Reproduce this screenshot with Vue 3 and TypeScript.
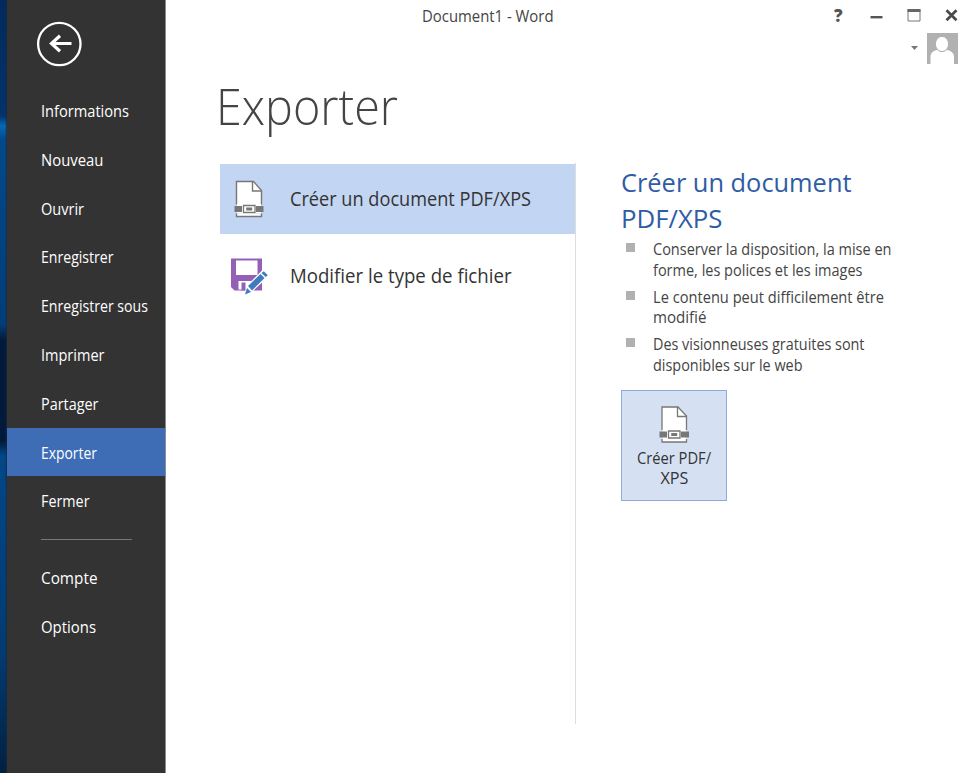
<script setup lang="ts">
import { ref } from 'vue'
import type { Directive } from 'vue'

interface NavItem {
  label: string
  width: number
  separated?: boolean
}

interface Line {
  text: string
  width: number
}

// Condenses a label horizontally so that it occupies the given width.
const vFit: Directive<HTMLElement, number> = {
  mounted(el, { value }) {
    const natural = el.getBoundingClientRect().width
    el.style.transform = `scaleX(${value / natural})`
  },
}

const navItems: NavItem[] = [
  { label: 'Informations', width: 88 },
  { label: 'Nouveau', width: 62.5 },
  { label: 'Ouvrir', width: 43 },
  { label: 'Enregistrer', width: 72.5 },
  { label: 'Enregistrer sous', width: 107 },
  { label: 'Imprimer', width: 63.5 },
  { label: 'Partager', width: 57.5 },
  { label: 'Exporter', width: 56 },
  { label: 'Fermer', width: 48.5 },
  { label: 'Compte', width: 56.5, separated: true },
  { label: 'Options', width: 55 },
]

const active = ref('Exporter')

const benefits: Line[][] = [
  [
    { text: 'Conserver la disposition, la mise en', width: 238.5 },
    { text: 'forme, les polices et les images', width: 209.5 },
  ],
  [
    { text: 'Le contenu peut difficilement être', width: 231 },
    { text: 'modifié', width: 53.5 },
  ],
  [
    { text: 'Des visionneuses gratuites sont', width: 211.5 },
    { text: 'disponibles sur le web', width: 149.5 },
  ],
]
</script>

<template>
  <div class="window">
    <div class="desktop-edge"></div>
    <nav class="sidebar">
      <button class="back" aria-label="Retour">
        <svg width="46" height="46" viewBox="0 0 46 46" fill="none" stroke="#fff">
          <circle cx="23.3" cy="23" r="21.2" stroke-width="2.3" />
          <path d="M35.500 22.500H15" stroke-width="3" />
          <path d="M24 14.800 15.500 22.500l8.500 7.700" stroke-width="3.200" />
        </svg>
      </button>
      <template v-for="item in navItems" :key="item.label">
        <div v-if="item.separated" class="separator"></div>
        <a class="nav-item" :class="{ active: item.label === active }" @click="active = item.label">
          <span v-fit="item.width" class="fit">{{ item.label }}</span>
        </a>
      </template>
    </nav>

    <main class="backstage">
      <header class="titlebar">
        <span v-fit="131.5" class="fit">Document1 - Word</span>
        <div class="controls">
          <span class="help">?</span>
          <svg class="window-icons" width="85" height="16" viewBox="0 0 85 16" fill="none">
            <path d="M-.5 10.200h12" stroke="#555" stroke-width="2.400" />
            <path d="M37 2.500h12v11.500H37z" stroke="#777" />
            <path d="M36.500 3.500h13" stroke="#666" stroke-width="3" />
            <path d="m75.500 3.200 10 10M85.500 3.200l-10 10" stroke="#4a4a4a" stroke-width="2.700" />
          </svg>
        </div>
      </header>
      <div class="account">
        <svg width="7" height="4" viewBox="0 0 7 4"><path d="M0 0h7L3.500 4z" fill="#777" /></svg>
        <svg width="31" height="31" viewBox="0 0 31 31">
          <path d="M0 0h31v31H0z" fill="#b1b1b1" />
          <path d="M3.500 31v-7c0-4 2.500-6.500 7-7 2.500 2.500 6.500 2.500 9 0 4.500.5 7.500 3 7.500 7v7z" fill="#fff" />
          <ellipse cx="15" cy="11" rx="6.600" ry="7.600" fill="#fff" stroke="#b1b1b1" />
        </svg>
      </div>

      <h1><span v-fit="182" class="fit">Exporter</span></h1>
      <div class="columns">
        <section class="choices">
          <div class="choice current">
            <svg class="pdf-icon" width="32" height="38" viewBox="0 0 32 38" fill="none">
              <path d="M3.500 1.500h17l8 9v26h-25z" fill="#fff" stroke="#777" stroke-width="1.400" />
              <path d="M19.500 1.500v9.500h9" stroke="#777" stroke-width="1.400" />
              <path d="M2 24.500h28v9H2z" class="pdf-gap" />
              <path d="M4 24h24v9H4z" fill="#fff" />
              <path d="M1.500 26h29v6H1.500z" fill="#777" />
              <path d="M9 24h14v10H9z" fill="#fff" />
              <path d="M10.500 25.500H22v7H10.500z" fill="#fff" stroke="#777" stroke-width="1.300" />
              <path d="M13.200 27.500h6v3h-6z" fill="#777" />
            </svg>
            <span v-fit="241" class="fit">Créer un document PDF/XPS</span>
          </div>
          <div class="choice">
            <svg class="disk-icon" width="38" height="38" viewBox="0 0 38 38" fill="none">
              <path d="M1 1.500h31v32H4.500L1 30z" fill="#9460b5" />
              <path d="M6 3.500h21.500V18H6zM8.500 24h15v8.500h-15z" fill="#fff" />
              <path d="M11.500 25.500h4v8h-4z" fill="#9460b5" />
              <path d="m14 37.500 3-9L32 13.500l6.500 6L23 34z" fill="#fff" />
              <path d="m15 37.500 2-6.500 4 4zM18 29 30.500 17l4 4L22 33.500zM31.500 16l2.300-1.800 4 4-2.200 1.800z" fill="#3e7cbd" />
            </svg>
            <span v-fit="221.5" class="fit">Modifier le type de fichier</span>
          </div>
        </section>

        <section class="details">
          <h2>
            <span v-fit="230.5" class="fit">Créer un document</span><br />
            <span v-fit="101.5" class="fit">PDF/XPS</span>
          </h2>
          <ul>
            <li v-for="(lines, i) in benefits" :key="i">
              <div v-for="line in lines" :key="line.text">
                <span v-fit="line.width" class="fit">{{ line.text }}</span>
              </div>
            </li>
          </ul>
          <button class="create">
            <svg width="32" height="38" viewBox="0 0 32 38" fill="none">
              <path d="M4 1h16l8.500 9v26H4z" fill="#fff" stroke="#777" stroke-width="1.300" />
              <path d="M19.500 1v9.500h9" stroke="#777" stroke-width="1.300" />
              <path d="M2 24h28v9H2z" class="create-gap" />
              <path d="M4.500 24H28v9H4.500z" fill="#fff" />
              <path d="M1.500 25.500H31v6H1.500z" fill="#777" />
              <path d="M9 24h14v9H9z" fill="#fff" />
              <path d="M10.500 25H22v7H10.500z" fill="#fff" stroke="#777" stroke-width="1.300" />
              <path d="M13.200 27h6v3h-6z" fill="#777" />
            </svg>
            <span v-fit="74" class="fit center">Créer PDF/</span>
            <span v-fit="28" class="fit center">XPS</span>
          </button>
        </section>
      </div>
    </main>
  </div>
</template>

<style>
body {
  overflow: hidden;
}
</style>

<style scoped>
.window {
  display: flex;
  width: 968px;
  height: 773px;
  background: #fff;
  color: #444;
  font-family: 'Open Sans', 'Noto Sans', sans-serif;
  font-size: 15.500px;
}

button {
  font: inherit;
  padding: 0;
  border: 0;
  background: none;
}

.fit {
  display: inline-block;
  white-space: nowrap;
  transform-origin: left center;
}

.fit.center {
  transform-origin: center;
}

.desktop-edge {
  width: 7px;
  flex: none;
  background: linear-gradient(to right, transparent 5px, #1a2838cc 7px), linear-gradient(#022a5c, #02336c 15%, #0769b6 16.300%, #02498a 18%, #023d78 42%, #021a3a 44%, #021a3a 57%, #024787 59%, #023a72 85%, #02203f 100%);
}

.sidebar {
  flex: none;
  width: 159px;
  box-sizing: border-box;
  border-right: 1px solid #8b8b8b;
  background: #333;
  color: #fff;
  font-weight: 500;
}

.back {
  display: block;
  width: 46px;
  height: 46px;
  margin: 21px 0 19px 29px;
}

.nav-item {
  display: block;
  height: 48.800px;
  padding-left: 34px;
  line-height: 50px;
}

.nav-item.active {
  background: #3e6db5;
}

.separator {
  width: 91px;
  height: 1px;
  margin: 14px 0 13px 34px;
  background: #777;
}

.backstage {
  flex: 1;
  min-width: 0;
}

.titlebar {
  display: flex;
  justify-content: space-between;
  height: 32px;
  padding-left: 256px;
  line-height: 32px;
}

.controls {
  display: flex;
  padding-right: 12px;
}

.help {
  width: 37px;
  color: #555;
  font-size: 17px;
  font-weight: 800;
  line-height: 31px;
}

.window-icons {
  margin-top: 7px;
  overflow: visible;
}

.account {
  display: flex;
  justify-content: flex-end;
  align-items: center;
  gap: 9px;
  height: 32px;
  padding-right: 10px;
}

h1 {
  height: 80px;
  margin: 7px 0 0 50px;
  color: #444;
  font-size: 50px;
  font-weight: 300;
  line-height: 71px;
}

.columns {
  display: flex;
  height: 561px;
  margin: 12px 0 0 54px;
}

.choices {
  width: 355px;
  padding-top: 1px;
  border-right: 1px solid #ddd;
}

.choice {
  display: flex;
  align-items: center;
  height: 70px;
  margin-bottom: 7px;
  padding-left: 13px;
  color: #333;
  font-size: 19.500px;
}

.choice.current {
  background-color: #c2d5f2;
}

.choice .fit {
  margin-top: -2px;
}

.pdf-icon {
  margin-right: 25px;
}

.pdf-gap {
  fill: #c2d5f2;
}

.create-gap {
  fill: #d5e1f3;
}

.disk-icon {
  margin-left: -3px;
  margin-right: 22px;
}

.details {
  padding-left: 45px;
}

h2 {
  margin: 1px 0 3px;
  color: #2f5ca5;
  font-size: 26px;
  font-weight: 400;
  line-height: 36px;
}

ul {
  display: grid;
  gap: 6px;
  margin: 0;
  padding: 0;
  list-style: none;
}

li {
  padding-left: 32px;
  line-height: 20.800px;
  background: linear-gradient(#b1b1b1, #b1b1b1) 5px 4px / 9px 9px no-repeat;
}

.create {
  display: flex;
  flex-direction: column;
  align-items: center;
  width: 106px;
  height: 111px;
  margin-top: 14px;
  padding-top: 15px;
  border: 1px solid #8faadc;
  background: #d5e1f3;
  color: #333;
  font-weight: 500;
  line-height: 20.500px;
}

.create svg {
  flex: none;
  margin-bottom: 4px;
}
</style>
